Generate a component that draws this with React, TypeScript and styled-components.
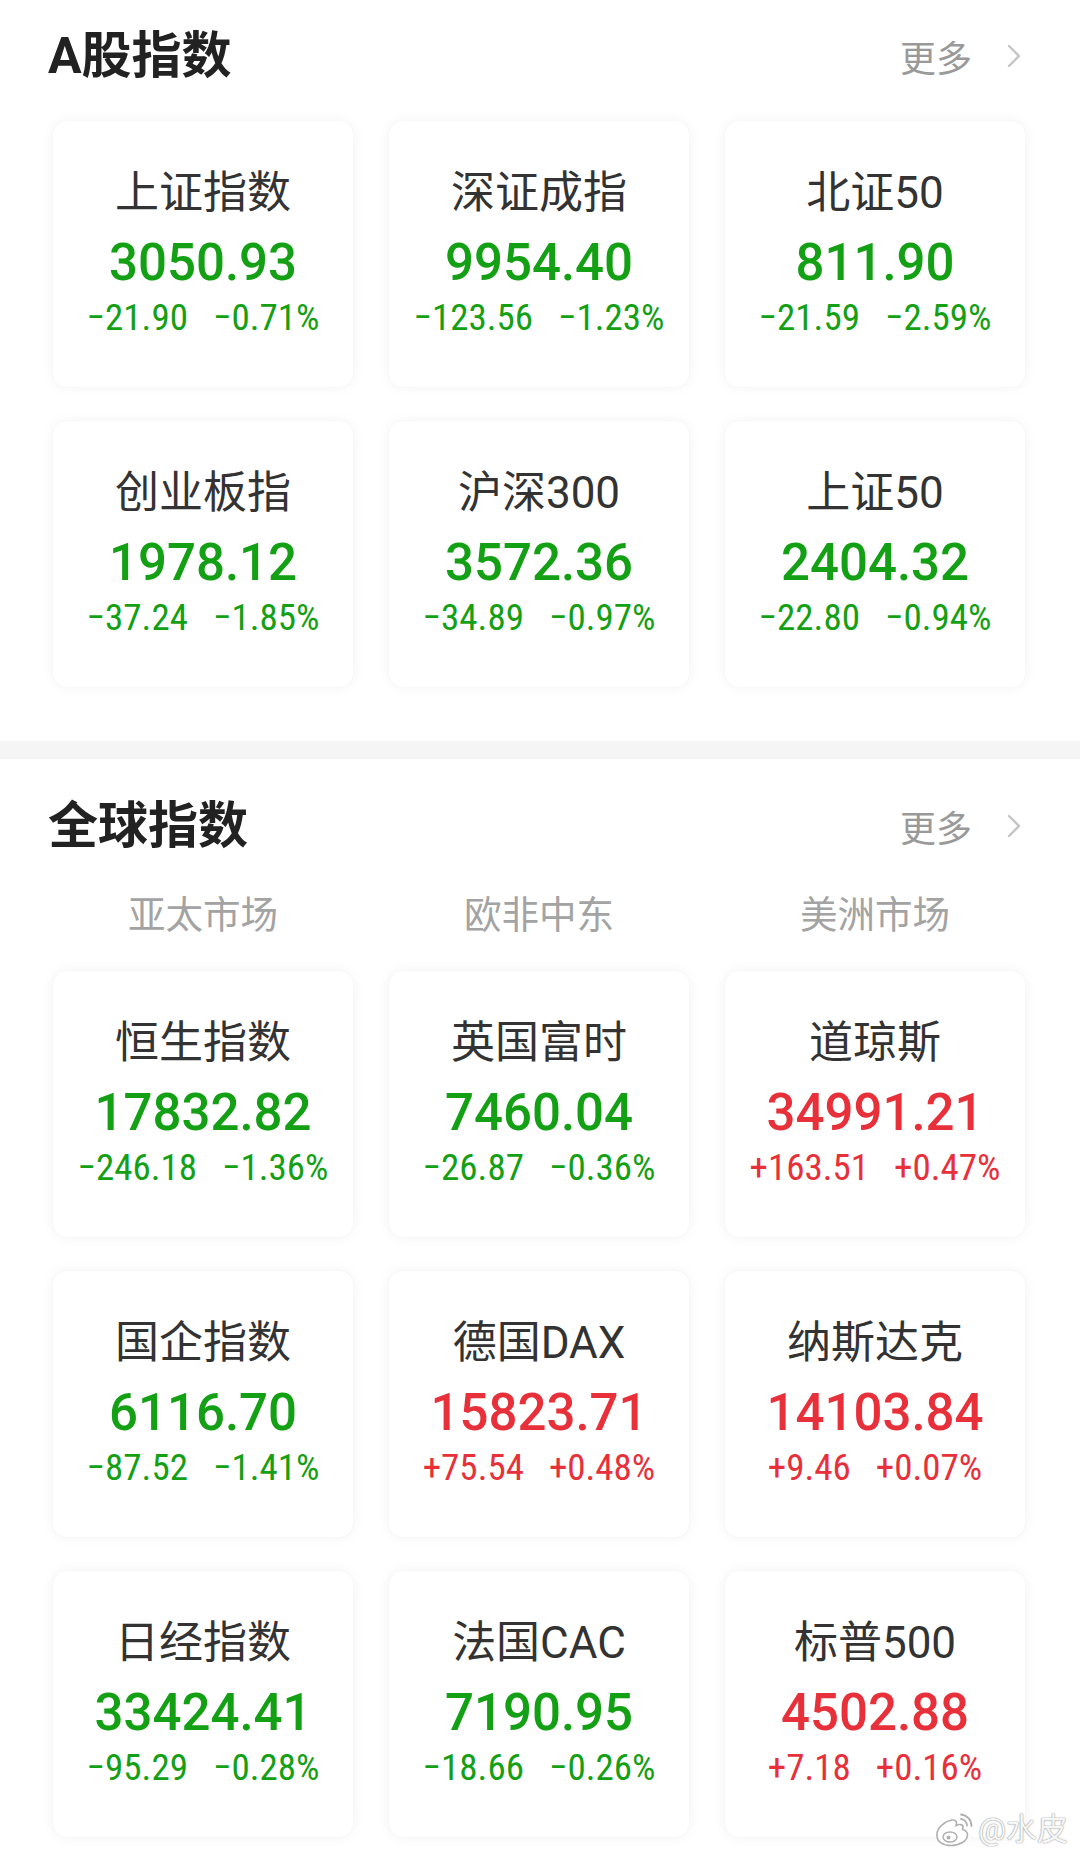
import React from "react";
import styled, { createGlobalStyle } from "styled-components";

const GlobalStyle = createGlobalStyle`
  html, body {
    margin: 0;
    padding: 0;
    background: #ffffff;
  }
  body {
    font-family: "Roboto", "Noto Sans CJK SC", sans-serif;
    -webkit-font-smoothing: antialiased;
  }
`;

const GREEN = "#14a014";
const RED = "#e8303a";

type Quote = { name: string; value: string; diff: string; pct: string };

const aShares: Quote[] = [
  { name: "上证指数", value: "3050.93", diff: "−21.90", pct: "−0.71%" },
  { name: "深证成指", value: "9954.40", diff: "−123.56", pct: "−1.23%" },
  { name: "北证50", value: "811.90", diff: "−21.59", pct: "−2.59%" },
  { name: "创业板指", value: "1978.12", diff: "−37.24", pct: "−1.85%" },
  { name: "沪深300", value: "3572.36", diff: "−34.89", pct: "−0.97%" },
  { name: "上证50", value: "2404.32", diff: "−22.80", pct: "−0.94%" },
];

const globalIdx: Quote[] = [
  { name: "恒生指数", value: "17832.82", diff: "−246.18", pct: "−1.36%" },
  { name: "英国富时", value: "7460.04", diff: "−26.87", pct: "−0.36%" },
  { name: "道琼斯", value: "34991.21", diff: "+163.51", pct: "+0.47%" },
  { name: "国企指数", value: "6116.70", diff: "−87.52", pct: "−1.41%" },
  { name: "德国DAX", value: "15823.71", diff: "+75.54", pct: "+0.48%" },
  { name: "纳斯达克", value: "14103.84", diff: "+9.46", pct: "+0.07%" },
  { name: "日经指数", value: "33424.41", diff: "−95.29", pct: "−0.28%" },
  { name: "法国CAC", value: "7190.95", diff: "−18.66", pct: "−0.26%" },
  { name: "标普500", value: "4502.88", diff: "+7.18", pct: "+0.16%" },
];

const Page = styled.div`
  position: relative;
  width: 1080px;
  height: 1860px;
  background: #ffffff;
  overflow: hidden;
`;

const Section = styled.section<{ $topPad: number; $bottomPad: number }>`
  padding: ${(p) => p.$topPad}px 0 ${(p) => p.$bottomPad}px;
`;

const Divider = styled.div`
  height: 18px;
  background: #f5f5f5;
`;

const Header = styled.div`
  height: 112px;
  display: flex;
  align-items: center;
  justify-content: space-between;
  padding: 0 58px 0 48px;
`;

const Title = styled.h2`
  margin: 0;
  font-family: "Roboto", "Noto Sans CJK SC", sans-serif;
  font-size: 50px;
  line-height: 60px;
  font-weight: 700;
  color: #222222;
`;

const More = styled.div`
  display: flex;
  align-items: center;
  gap: 34px;
  font-family: "Noto Sans CJK SC", sans-serif;
  font-size: 36px;
  line-height: 44px;
  color: #999999;
`;

const Tabs = styled.div`
  margin-top: 8px;
  padding: 0 55px 0 53px;
  display: grid;
  grid-template-columns: repeat(3, 300px);
  column-gap: 36px;
`;

const Tab = styled.div`
  text-align: center;
  font-family: "Noto Sans CJK SC", sans-serif;
  font-size: 37.5px;
  line-height: 44px;
  color: #a3a3a3;
`;

const Grid = styled.div<{ $top: number }>`
  margin-top: ${(p) => p.$top}px;
  padding: 0 55px 0 53px;
  display: grid;
  grid-template-columns: repeat(3, 300px);
  column-gap: 36px;
  row-gap: 34px;
`;

const Card = styled.div`
  height: 266px;
  box-sizing: border-box;
  padding-top: 46px;
  background: #ffffff;
  border-radius: 14px;
  box-shadow: 0 0 14px rgba(0, 0, 0, 0.055), 0 0 2px rgba(0, 0, 0, 0.03);
  display: flex;
  flex-direction: column;
  align-items: center;
`;

const Name = styled.div`
  font-family: "Roboto", "Noto Sans CJK SC", sans-serif;
  font-size: 44px;
  line-height: 52px;
  color: #333333;
  white-space: nowrap;
`;

const Value = styled.div<{ $up: boolean }>`
  margin-top: 14px;
  font-family: "Roboto", sans-serif;
  font-size: 51px;
  line-height: 60px;
  font-weight: 500;
  font-stretch: 92%;
  color: ${(p) => (p.$up ? RED : GREEN)};
  white-space: nowrap;
`;

const Change = styled.div<{ $up: boolean }>`
  margin-top: 5px;
  display: flex;
  gap: 25px;
  font-family: "Roboto", sans-serif;
  font-size: 37px;
  line-height: 40px;
  font-stretch: 85%;
  color: ${(p) => (p.$up ? RED : GREEN)};
  white-space: nowrap;
`;

const Watermark = styled.div`
  position: absolute;
  right: 12px;
  bottom: 12px;
  display: flex;
  align-items: center;
  gap: 4px;
  font-family: "Roboto", "Noto Sans CJK SC", sans-serif;
  font-size: 31px;
  line-height: 36px;
  color: rgba(255, 255, 255, 0.95);
  text-shadow: 0 0 1px rgba(0, 0, 0, 0.45), 0 0 2px rgba(0, 0, 0, 0.25);
`;

const Chevron = () => (
  <svg width="16" height="24" viewBox="0 0 16 24" fill="none">
    <path d="M3 2 L13 12 L3 22" stroke="#c4c4c4" strokeWidth="2.4" strokeLinecap="round" strokeLinejoin="round" />
  </svg>
);

const WeiboLogo = () => (
  <svg width="40" height="34" viewBox="0 0 40 34" fill="none">
    <path
      d="M3 21 C3 15 11 8 18 7 C22 6.5 23.5 9 22 12.5 C25 11 29 11.2 29 14 C29 15 28.6 15.8 28.6 16.4 C31.5 17.2 33.5 19 33.5 22 C33.5 28 25.5 32.5 17 32.5 C9 32.5 3 28.5 3 23 Z"
      fill="#ffffff"
      stroke="#b0b0b0"
      strokeWidth="1.6"
    />
    <ellipse cx="16" cy="24" rx="7" ry="5" fill="#ffffff" stroke="#b0b0b0" strokeWidth="1.5" />
    <circle cx="14.5" cy="24.5" r="2" fill="#b0b0b0" />
    <path d="M27 6 A7 7 0 0 1 33 12.5" stroke="#b0b0b0" strokeWidth="1.8" strokeLinecap="round" />
    <path d="M27 1.5 A11.5 11.5 0 0 1 37.5 13" stroke="#b0b0b0" strokeWidth="1.8" strokeLinecap="round" />
  </svg>
);

const QuoteCard = ({ q }: { q: Quote }) => {
  const up = q.diff.startsWith("+");
  return (
    <Card>
      <Name>{q.name}</Name>
      <Value $up={up}>{q.value}</Value>
      <Change $up={up}>
        <span>{q.diff}</span>
        <span>{q.pct}</span>
      </Change>
    </Card>
  );
};

const SectionHeader = ({ title }: { title: string }) => (
  <Header>
    <Title>{title}</Title>
    <More>
      <span>更多</span>
      <Chevron />
    </More>
  </Header>
);

export default function App() {
  return (
    <Page>
      <GlobalStyle />
      <Section $topPad={0} $bottomPad={54}>
        <SectionHeader title="A股指数" />
        <Grid $top={9}>
          {aShares.map((q) => (
            <QuoteCard key={q.name} q={q} />
          ))}
        </Grid>
      </Section>
      <Divider />
      <Section $topPad={11} $bottomPad={0}>
        <SectionHeader title="全球指数" />
        <Tabs>
          <Tab>亚太市场</Tab>
          <Tab>欧非中东</Tab>
          <Tab>美洲市场</Tab>
        </Tabs>
        <Grid $top={37}>
          {globalIdx.map((q) => (
            <QuoteCard key={q.name} q={q} />
          ))}
        </Grid>
      </Section>
      <Watermark>
        <WeiboLogo />
        <span>@水皮</span>
      </Watermark>
    </Page>
  );
}
